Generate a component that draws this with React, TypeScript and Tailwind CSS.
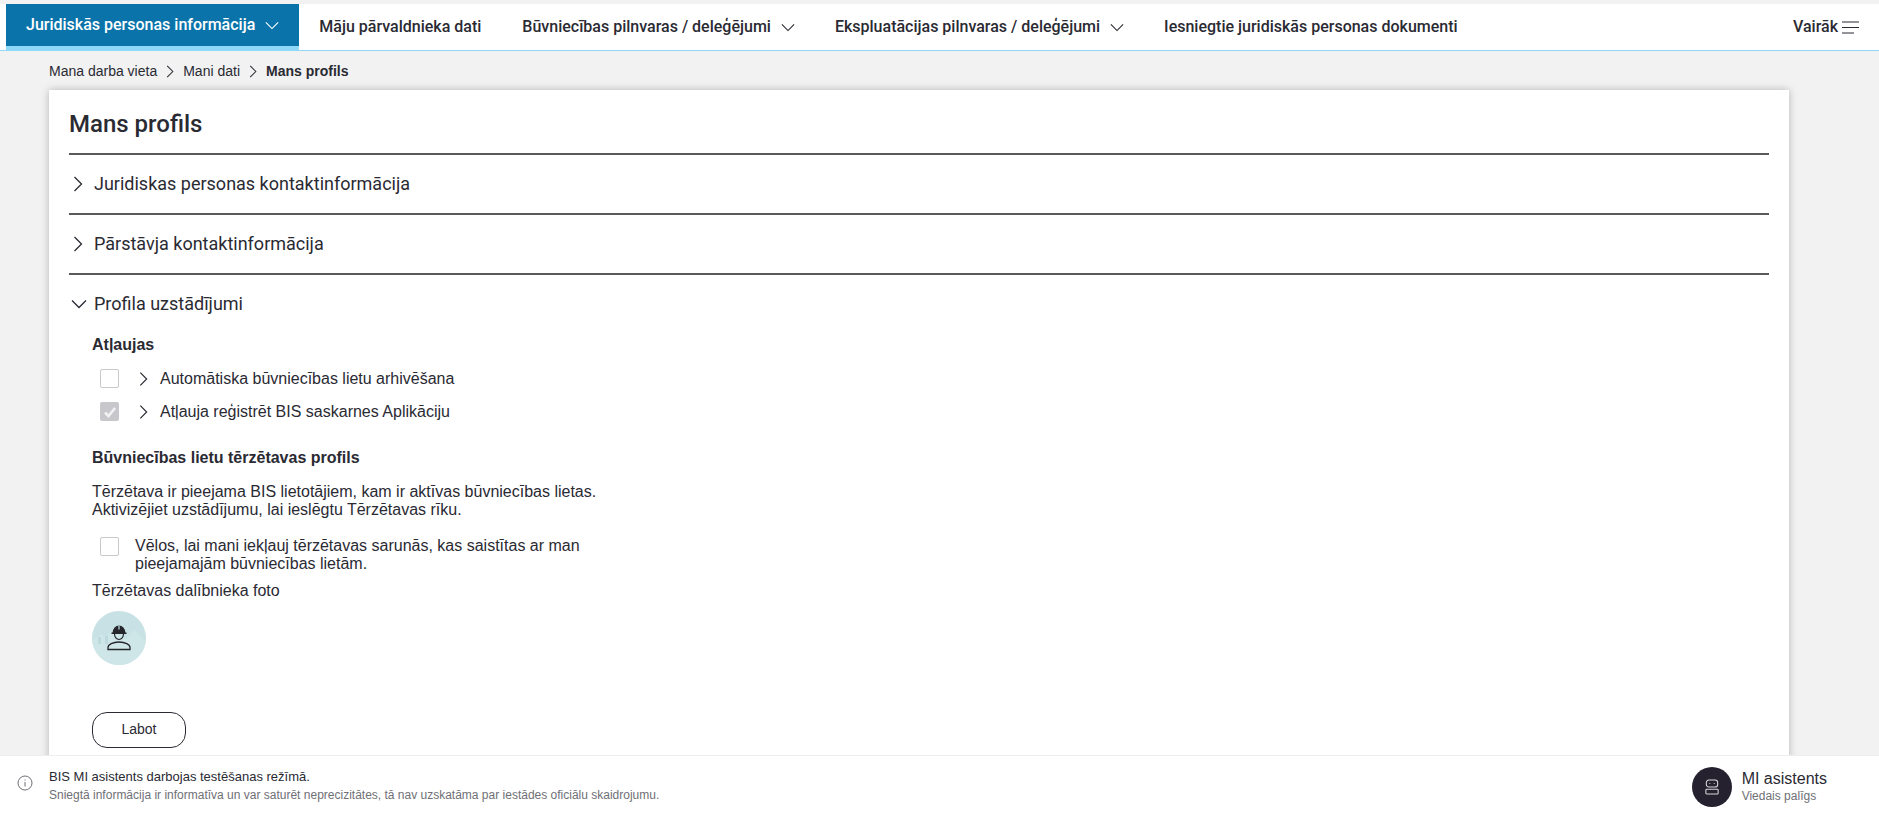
import React from "react";

const arial = "font-['Liberation_Sans',Arial,sans-serif]";
const roboto = "font-['Roboto',sans-serif]";

function Chevron({ dir, className = "" }: { dir: "right" | "down"; className?: string }) {
  return dir === "down" ? (
    <svg viewBox="0 0 16 10" className={className} fill="none" stroke="currentColor" strokeWidth="1.3">
      <path d="M1 1.5 8 8.5 15 1.5" />
    </svg>
  ) : (
    <svg viewBox="0 0 10 16" className={className} fill="none" stroke="currentColor" strokeWidth="1.3">
      <path d="M1.5 1 8.5 8 1.5 15" />
    </svg>
  );
}

function NavItem({ label, caret, active, extra = "" }: { label: string; caret?: boolean; active?: boolean; extra?: string }) {
  return (
    <div
      className={
        "flex h-[46px] items-center gap-[10px] px-5 whitespace-nowrap text-[16px] font-medium " +
        extra +
        " " +
        (active ? "bg-[#0a74aa] text-white border-b-4 border-[#8fd8f8]" : "text-[#2a2a33]")
      }
    >
      <span>{label}</span>
      {caret && <Chevron dir="down" className="h-[9px] w-[14px]" />}
    </div>
  );
}

function AccordionRow({ label, open }: { label: string; open?: boolean }) {
  return (
    <div className="flex h-[60px] items-center border-t-2 border-[#5a5a5a] pb-[1px] text-[18px] text-[#2a2a33]">
      <div className="flex w-[26px] shrink-0 justify-start pl-[2px]">
        {open ? (
          <Chevron dir="down" className="h-[10px] w-[16px]" />
        ) : (
          <Chevron dir="right" className="ml-[2px] h-[16px] w-[10px]" />
        )}
      </div>
      <span className="-ml-[1px]">{label}</span>
    </div>
  );
}

function Box({ checked }: { checked?: boolean }) {
  return checked ? (
    <div className="flex h-[19px] w-[19px] shrink-0 items-center justify-center rounded-[2px] bg-[#c8c8cc]">
      <svg viewBox="0 0 14 14" className="h-[14px] w-[14px]" fill="none" stroke="#f2f2f2" strokeWidth="2.6">
        <path d="M2 7.5 5.5 11 12 3" />
      </svg>
    </div>
  ) : (
    <div className="h-[19px] w-[19px] shrink-0 rounded-[2px] border border-[#c9c9cc] bg-white" />
  );
}

function PermRow({ label, checked }: { label: string; checked?: boolean }) {
  return (
    <div className="flex h-[19px] items-center pl-2 text-[16px] text-[#2a2a33]">
      <Box checked={checked} />
      <Chevron dir="right" className="ml-[20px] mr-[12px] mt-[1px] h-[16px] w-[9px]" />
      <span className="whitespace-nowrap">{label}</span>
    </div>
  );
}

export default function App() {
  return (
    <div className={"flex h-[818px] w-full flex-col overflow-hidden bg-[#f2f2f2] pt-1 " + arial}>
      <nav className={"flex h-[47px] shrink-0 items-start justify-between border-b border-[#8fd8f8] bg-white pl-[6px] pr-5 " + roboto}>
        <div className="flex">
          <NavItem label="Juridiskās personas informācija" caret active />
          <NavItem label="Māju pārvaldnieka dati" extra="pr-[21px]" />
          <NavItem label="Būvniecības pilnvaras / deleģējumi" caret />
          <NavItem label="Ekspluatācijas pilnvaras / deleģējumi" caret />
          <NavItem label="Iesniegtie juridiskās personas dokumenti" />
        </div>
        <div className="flex h-[46px] items-center gap-[4px] text-[16px] font-medium text-[#2a2a33]">
          <span>Vairāk</span>
          <svg viewBox="0 0 17 13" className="h-[13px] w-[17px]" fill="none" stroke="#2a2a33" strokeWidth="1.2">
            <path d="M0 1h17M0 6.5h17M0 12h12" />
          </svg>
        </div>
      </nav>

      <main className="min-h-0 flex-1 overflow-hidden px-[49px]">
        <div className="flex h-[39px] items-center pt-[1px] text-[14px] text-[#2a2a33]">
          <span>Mana darba vieta</span>
          <Chevron dir="right" className="mx-[9px] h-[13px] w-[8px]" />
          <span>Mani dati</span>
          <Chevron dir="right" className="mx-[9px] h-[13px] w-[8px]" />
          <span className="font-bold">Mans profils</span>
        </div>

        <section className="w-[1740px] bg-white px-5 pb-10 shadow-[0_0_8px_rgba(0,0,0,0.25)]">
          <h1 className={"flex h-[63px] items-center pt-1 text-[24px] font-medium text-[#2a2a33] " + roboto}>Mans profils</h1>
          <div className={roboto}>
            <AccordionRow label="Juridiskas personas kontaktinformācija" />
            <AccordionRow label="Pārstāvja kontaktinformācija" />
            <AccordionRow label="Profila uzstādījumi" open />
          </div>

          <div className="pl-[23px] text-[16px] leading-[18px] text-[#2a2a33]">
            <h2 className="mt-[3px] font-bold">Atļaujas</h2>
            <div className="mt-[15px] flex flex-col gap-[14px]">
              <PermRow label="Automātiska būvniecības lietu arhivēšana" />
              <PermRow label="Atļauja reģistrēt BIS saskarnes Aplikāciju" checked />
            </div>
            <h2 className="mt-[28px] font-bold">Būvniecības lietu tērzētavas profils</h2>
            <p className="mt-[16px] whitespace-nowrap">
              Tērzētava ir pieejama BIS lietotājiem, kam ir aktīvas būvniecības lietas.
              <br />
              Aktivizējiet uzstādījumu, lai ieslēgtu Tērzētavas rīku.
            </p>
            <div className="mt-[18px] flex pl-2">
              <Box />
              <p className="ml-[16px] whitespace-nowrap">
                Vēlos, lai mani iekļauj tērzētavas sarunās, kas saistītas ar man
                <br />
                pieejamajām būvniecības lietām.
              </p>
            </div>
            <p className="mt-[9px]">Tērzētavas dalībnieka foto</p>
            <div className="mt-[11px] h-[54px] w-[54px] overflow-hidden rounded-full bg-[#c7e1e4]">
              <svg viewBox="0 0 54 54" className="h-full w-full">
                <path d="M0 30 9 23l5 3 6-6 14 8 8-9 12 12v23H0z" fill="#cfe6e8" />
                <path d="M6 26h3v7H6zM13 25h3v8h-3z" fill="#bcdadd" />
                <path d="M20.5 22a6.5 7.5 0 0 1 13 0z" fill="#25252b" />
                <path d="M26.4 14.5h1.2v4h-1.2z" fill="#c7e1e4" />
                <path d="M19.5 22.3h15" stroke="#25252b" strokeWidth="1.4" fill="none" />
                <path d="M22.5 23a4.5 5.5 0 0 0 9 0" fill="none" stroke="#25252b" strokeWidth="1.2" />
                <path d="M16 38.5v-2c0-3 5-5.5 11-5.5s11 2.500 11 5.500v2z" fill="none" stroke="#25252b" strokeWidth="1.3" />
              </svg>
            </div>
            <button className="mt-[47px] flex h-[36px] w-[94px] items-center justify-center rounded-[15px] border border-[#2a2a33] bg-white pb-[2px] text-[14px]">
              Labot
            </button>
          </div>
        </section>
      </main>

      <footer className="flex h-[63px] shrink-0 items-center justify-between border-t border-[#eeeeee] bg-white pl-[17px] pr-[52px]">
        <div className="flex">
          <svg viewBox="0 0 16 16" className="mt-[6px] h-[16px] w-[16px]" fill="none" stroke="#5f5f66" strokeWidth="0.9">
            <circle cx="8" cy="8" r="7" />
            <path d="M8 7v4.500M8 4.500v1" />
          </svg>
          <div className="ml-[16px] -mt-[1px] flex flex-col">
            <span className="text-[13px] leading-[18px] text-[#2a2a33]">BIS MI asistents darbojas testēšanas režīmā.</span>
            <span className="text-[12px] leading-[19px] text-[#6f6f76]">
              Sniegtā informācija ir informatīva un var saturēt neprecizitātes, tā nav uzskatāma par iestādes oficiālu skaidrojumu.
            </span>
          </div>
        </div>
        <div className="flex items-center gap-[10px]">
          <div className="flex h-[40px] w-[40px] items-center justify-center rounded-full bg-[#25212f]">
            <svg viewBox="0 0 16 18" className="h-[16px] w-[14px]" fill="none" stroke="#d8d8dc" strokeWidth="1.2">
              <rect x="1.500" y="1" width="13" height="8" rx="3" />
              <rect x="1" y="11.500" width="14" height="5.500" rx="1" />
              <path d="M5 5h1M10 5h1" />
            </svg>
          </div>
          <div className="flex flex-col">
            <span className="text-[16px] leading-[18px] text-[#2a2a33]">MI asistents</span>
            <span className="text-[12px] leading-[16px] text-[#6f6f76]">Viedais palīgs</span>
          </div>
        </div>
      </footer>
    </div>
  );
}
